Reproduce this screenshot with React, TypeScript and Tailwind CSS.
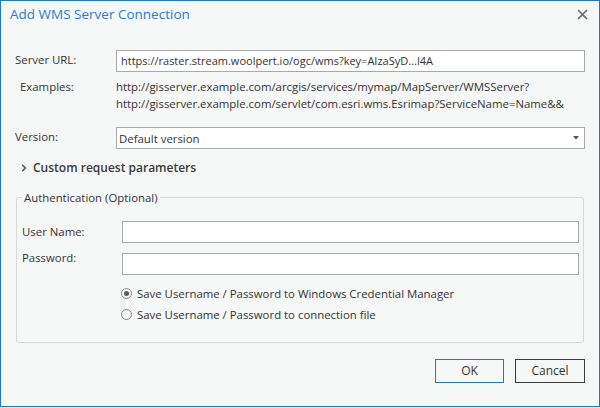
import React from 'react';

function CloseIcon() {
  return (
    <svg width="11" height="11" viewBox="0 0 11 11" className="text-[#6b6b6b]">
      <path d="M1 1 L10 10 M10 1 L1 10" stroke="currentColor" strokeWidth="1.6" fill="none" />
    </svg>
  );
}

function Chevron() {
  return (
    <svg width="6" height="8" viewBox="0 0 6 8" className="text-[#555]">
      <path d="M1.2 0.8 L4.4 4 L1.2 7.2" stroke="currentColor" strokeWidth="1.5" fill="none" />
    </svg>
  );
}

function Radio({ checked }: { checked?: boolean }) {
  return (
    <span className="flex h-[11px] w-[11px] items-center justify-center rounded-full border border-[#8a8a8a] bg-[#f6f7f7]">
      {checked && <span className="h-[5px] w-[5px] rounded-full bg-[#5a5a5a]" />}
    </span>
  );
}

function App() {
  return (
    <div className="h-[408px] w-[600px] bg-[#e8ebeb] font-['Open_Sans','Noto_Sans',sans-serif] text-[11.4px] text-[#333]">
      <div className="flex h-[407px] flex-col border border-[#1b79cf] bg-[#f6f7f7]">
        {/* Title bar */}
        <div className="flex h-[27px] items-center justify-between pl-[9px] pr-[11px]">
          <h1 className="text-[13.5px] text-[#2b7cd1]">Add WMS Server Connection</h1>
          <CloseIcon />
        </div>

        <div className="flex flex-col px-[14px]">
          {/* Server URL */}
          <div className="mt-[22px] flex items-center">
            <label className="w-[101px] pb-[3px]">Server URL:</label>
            <div className="flex h-[22px] flex-1 items-center border border-[#a9a9a9] bg-white pl-[4px] pt-[1px] text-[11px]">
              https://raster.stream.woolpert.io/ogc/wms?key=AIzaSyD...l4A
            </div>
          </div>

          {/* Examples */}
          <div className="mt-[6px] flex leading-[17.3px]">
            <span className="w-[101px] pl-[5px]">Examples:</span>
            <div className="flex flex-col">
              <span>http://gisserver.example.com/arcgis/services/mymap/MapServer/WMSServer?</span>
              <span>http://gisserver.example.com/servlet/com.esri.wms.Esrimap?ServiceName=Name&amp;&amp;</span>
            </div>
          </div>

          {/* Version */}
          <div className="mt-[14px] flex items-center">
            <label className="w-[101px] pb-[3px]">Version:</label>
            <div className="flex h-[22px] flex-1 items-center justify-between border border-[#a9a9a9] bg-white pl-[2px] pr-[5px] pt-[1px]">
              <span>Default version</span>
              <svg width="6" height="4" viewBox="0 0 6 4" className="text-[#555]">
                <path d="M0 0 L6 0 L3 3.5 Z" fill="currentColor" />
              </svg>
            </div>
          </div>

          {/* Custom request parameters */}
          <div className="mt-[11px] flex h-[17px] items-center">
            <span className="ml-[6px] mr-[6px] flex">
              <Chevron />
            </span>
            <span className="text-[12px] font-semibold text-[#3a3a3a]">Custom request parameters</span>
          </div>

          {/* Authentication */}
          <fieldset className="mx-[1px] mt-[12px] rounded-[3px] border border-[#d6d9d9] pb-[19px] pl-[5px] pr-[4px]">
            <legend className="px-[2px] leading-[17px]">Authentication (Optional)</legend>

            <div className="mt-[15px] flex items-start">
              <label className="w-[100px] pt-[2px]">User Name:</label>
              <div className="h-[22px] flex-1 border border-[#a9a9a9] bg-white" />
            </div>
            <div className="mt-[10px] flex items-start">
              <label className="w-[100px] mt-[-4px]">Password:</label>
              <div className="h-[22px] flex-1 border border-[#a9a9a9] bg-white" />
            </div>

            <div className="ml-[99px] mt-[11px] flex flex-col gap-[5px]">
              <div className="flex h-[16px] items-center gap-[5px]">
                <Radio checked />
                <span>Save Username / Password to Windows Credential Manager</span>
              </div>
              <div className="flex h-[16px] items-center gap-[5px]">
                <Radio />
                <span>Save Username / Password to connection file</span>
              </div>
            </div>
          </fieldset>

          {/* Buttons */}
          <div className="mt-[16px] flex justify-end gap-[11px]">
            <button className="h-[24px] w-[69px] border border-[#1b79cf] bg-[#f6f7f7] text-[12px] text-[#333]">OK</button>
            <button className="h-[24px] w-[70px] border border-[#3c3c3c] bg-[#f6f7f7] text-[12px] text-[#333]">Cancel</button>
          </div>
        </div>
      </div>
    </div>
  );
}

export default App;
